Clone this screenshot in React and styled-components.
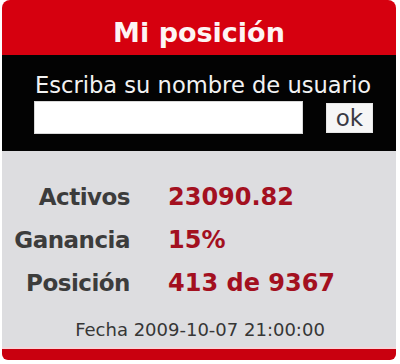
import { Fragment } from "react";
import styled, { createGlobalStyle } from "styled-components";

const GlobalStyle = createGlobalStyle`
  body {
    margin: 0;
    background: #ffffff;
    font-family: "DejaVu Sans", Verdana, sans-serif;
  }
`;

const Widget = styled.section`
  width: 394px;
  margin-left: 2px;
  display: flex;
  flex-direction: column;
`;

const Header = styled.h2`
  margin: 0;
  height: 55px;
  box-sizing: border-box;
  padding-top: 9px;
  display: flex;
  align-items: center;
  justify-content: center;
  background: #d6000f;
  border-radius: 8px 8px 0 0;
  color: #fdf4f4;
  font-size: 27px;
  font-weight: bold;
`;

const LoginBox = styled.form`
  height: 96px;
  box-sizing: border-box;
  padding-top: 17px;
  background: #030303;
  display: flex;
  flex-direction: column;
`;

const Prompt = styled.label`
  padding-left: 8px;
  text-align: center;
  color: #f2f2f2;
  font-size: 22.6px;
  line-height: 26px;
`;

const FormRow = styled.div`
  margin-top: 3px;
  padding-left: 32px;
  display: flex;
  align-items: center;
  gap: 23px;
`;

const UserInput = styled.input`
  width: 269px;
  height: 33px;
  box-sizing: border-box;
  margin: 0;
  border: 1px solid #d8d8d8;
  background: #ffffff;
  outline: none;
`;

const OkButton = styled.button`
  width: 47px;
  height: 30px;
  margin: 0;
  padding: 0;
  border: 1px solid #e6e6e6;
  background: #f6f6f6;
  color: #3a3a44;
  font-family: "DejaVu Sans", Verdana, sans-serif;
  font-size: 23px;
  line-height: 28px;
`;

const Stats = styled.div`
  height: 196px;
  box-sizing: border-box;
  padding-top: 25px;
  background: #dddde0;
  display: flex;
  flex-direction: column;
`;

const StatGrid = styled.dl`
  margin: 0;
  display: grid;
  grid-template-columns: 128px 1fr;
  column-gap: 38px;
  font-weight: bold;
  line-height: 43px;
`;

const Label = styled.dt`
  text-align: right;
  color: #3c3c3c;
  font-size: 23px;
  letter-spacing: -0.5px;
`;

const Value = styled.dd`
  margin: 0;
  color: #a3101f;
  font-size: 24px;
`;

const DateLine = styled.p`
  margin: 14px 0 0;
  padding-left: 2px;
  text-align: center;
  color: #363636;
  font-size: 18px;
  line-height: 22px;
`;

const BottomBar = styled.div`
  height: 11px;
  border-top: 2px solid #f3d6da;
  background: #c9000f;
  border-radius: 0 0 6px 6px;
`;

const stats = [
  { label: "Activos", value: "23090.82" },
  { label: "Ganancia", value: "15%" },
  { label: "Posición", value: "413 de 9367" },
];

export default function App() {
  return (
    <>
      <GlobalStyle />
      <Widget>
        <Header>Mi posición</Header>
        <LoginBox onSubmit={(e) => e.preventDefault()}>
          <Prompt htmlFor="usuario">Escriba su nombre de usuario</Prompt>
          <FormRow>
            <UserInput id="usuario" type="text" />
            <OkButton type="submit">ok</OkButton>
          </FormRow>
        </LoginBox>
        <Stats>
          <StatGrid>
            {stats.map(({ label, value }) => (
              <Fragment key={label}>
                <Label>{label}</Label>
                <Value>{value}</Value>
              </Fragment>
            ))}
          </StatGrid>
          <DateLine>Fecha 2009-10-07 21:00:00</DateLine>
        </Stats>
        <BottomBar />
      </Widget>
    </>
  );
}
